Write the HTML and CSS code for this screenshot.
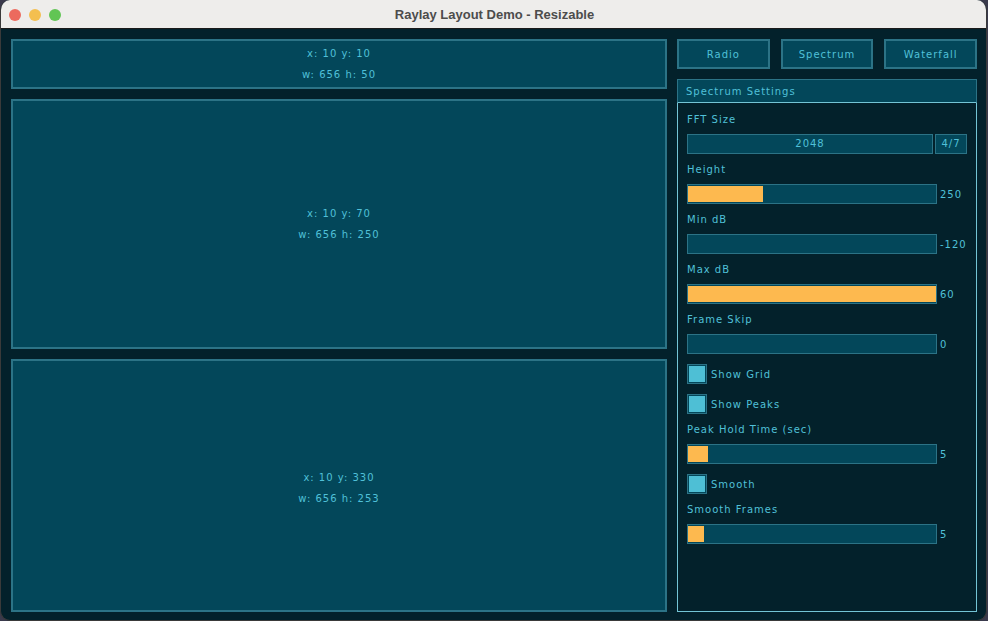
FILE: index.html
```html
<!DOCTYPE html>
<html lang="en">
<head>
  <meta charset="UTF-8">
  <title>Raylay Layout Demo - Resizable</title>
  <link rel="stylesheet" href="styles.css">
</head>
<body>
  <div class="window">
    <div class="titlebar">
      <div class="lights">
        <span class="light red"></span>
        <span class="light yellow"></span>
        <span class="light green"></span>
      </div>
      <div class="title">Raylay Layout Demo - Resizable</div>
    </div>
    <div class="content">
      <div class="left">
        <div class="box box-top">
          <div>x: 10 y: 10</div>
          <div>w: 656 h: 50</div>
        </div>
        <div class="box box-mid">
          <div>x: 10 y: 70</div>
          <div>w: 656 h: 250</div>
        </div>
        <div class="box box-bottom">
          <div>x: 10 y: 330</div>
          <div>w: 656 h: 253</div>
        </div>
      </div>
      <div class="right">
        <div class="tabs">
          <button class="tab">Radio</button>
          <button class="tab">Spectrum</button>
          <button class="tab">Waterfall</button>
        </div>
        <div class="settings">
          <div class="settings-head">Spectrum Settings</div>
          <div class="settings-body">
            <div class="label">FFT Size</div>
            <div class="spinner">
              <div class="spin-value">2048</div>
              <div class="spin-index">4/7</div>
            </div>

            <div class="label">Height</div>
            <div class="slider-row">
              <div class="slider"><div class="fill" style="width: 75px"></div></div>
              <span class="value">250</span>
            </div>

            <div class="label">Min dB</div>
            <div class="slider-row">
              <div class="slider"><div class="fill" style="width: 0px"></div></div>
              <span class="value">-120</span>
            </div>

            <div class="label">Max dB</div>
            <div class="slider-row">
              <div class="slider"><div class="fill" style="width: 248px"></div></div>
              <span class="value">60</span>
            </div>

            <div class="label">Frame Skip</div>
            <div class="slider-row">
              <div class="slider"><div class="fill" style="width: 0px"></div></div>
              <span class="value">0</span>
            </div>

            <div class="check-row">
              <span class="check"><span class="check-fill"></span></span>
              <span>Show Grid</span>
            </div>
            <div class="check-row">
              <span class="check"><span class="check-fill"></span></span>
              <span>Show Peaks</span>
            </div>

            <div class="label">Peak Hold Time (sec)</div>
            <div class="slider-row">
              <div class="slider"><div class="fill" style="width: 20px"></div></div>
              <span class="value">5</span>
            </div>

            <div class="check-row">
              <span class="check"><span class="check-fill"></span></span>
              <span>Smooth</span>
            </div>

            <div class="label">Smooth Frames</div>
            <div class="slider-row">
              <div class="slider"><div class="fill" style="width: 16px"></div></div>
              <span class="value">5</span>
            </div>
          </div>
        </div>
      </div>
    </div>
  </div>
</body>
</html>
```

FILE: styles.css
```css
* {
  box-sizing: border-box;
}
body {
  margin: 0;
  background: #3a3a4c;
  width: 988px;
  height: 621px;
  overflow: hidden;
}
.window {
  width: 987px;
  height: 621px;
  border-radius: 10px;
  overflow: hidden;
  background: #03212b;
  border: 1px solid #3a3a3a;
  border-top: none;
}
.titlebar {
  position: relative;
  height: 29px;
  background: #eeedeb;
  border-bottom: 1px solid #1a1a1a;
  display: flex;
  align-items: center;
  justify-content: center;
}
.lights {
  position: absolute;
  left: 8px;
  top: 9px;
  display: flex;
  gap: 8px;
}
.light {
  width: 12px;
  height: 12px;
  border-radius: 50%;
}
.red { background: #ec6a5e; }
.yellow { background: #f4bf4f; }
.green { background: #61c554; }
.title {
  font-family: "Liberation Sans", Arial, sans-serif;
  font-weight: bold;
  font-size: 13px;
  color: #4c4c4c;
  margin-left: 2px;
}
.content {
  display: flex;
  gap: 10px;
  padding: 10px 0 0 10px;
  font-family: "DejaVu Sans", sans-serif;
  font-size: 10px;
  letter-spacing: 1px;
  color: #50c0d8;
}
.left {
  width: 656px;
  display: flex;
  flex-direction: column;
  gap: 10px;
}
.box {
  background: #03475a;
  border: 2px solid #2c7386;
  display: flex;
  flex-direction: column;
  align-items: center;
  justify-content: center;
  gap: 9px;
  line-height: 12px;
}
.box-top { height: 50px; }
.box-mid { height: 250px; }
.box-bottom {
  height: 253px;
  padding-top: 5px;
}
.right {
  width: 300px;
  display: flex;
  flex-direction: column;
  gap: 10px;
}
.tabs {
  display: flex;
  gap: 11px;
}
.tab {
  flex: 1;
  height: 30px;
  background: #03475a;
  border: 2px solid #2c7386;
  color: #50c0d8;
  font-family: "DejaVu Sans", sans-serif;
  font-size: 10px;
  letter-spacing: 1px;
  padding: 0;
}
.settings {
  height: 533px;
  display: flex;
  flex-direction: column;
}
.settings-head {
  height: 24px;
  line-height: 24px;
  padding-left: 8px;
  background: #03475a;
  border: 1px solid #2c7386;
  border-bottom-color: #74c4d5;
}
.settings-body {
  flex: 1;
  border: 1px solid #74c4d5;
  border-top: none;
  padding: 6px 0 0 9px;
  display: flex;
  flex-direction: column;
  gap: 5px;
}
.label {
  height: 20px;
  line-height: 22px;
}
.spinner {
  display: flex;
  gap: 2px;
  height: 20px;
}
.spin-value,
.spin-index {
  background: #03475a;
  border: 1px solid #2c7386;
  text-align: center;
  line-height: 18px;
}
.spin-value { width: 246px; }
.spin-index { width: 32px; }
.slider-row {
  display: flex;
  align-items: center;
  gap: 3px;
  height: 20px;
}
.slider {
  width: 250px;
  height: 20px;
  background: #03475a;
  border: 1px solid #2c7386;
  padding: 1px 0;
}
.fill {
  height: 16px;
  background: #fdb94f;
}
.check-row {
  display: flex;
  align-items: center;
  gap: 4px;
  height: 20px;
  margin-top: 5px;
}
.check {
  width: 20px;
  height: 20px;
  border: 1px solid #2c7386;
  padding: 1px;
  background: #03475a;
}
.check-fill {
  display: block;
  width: 100%;
  height: 100%;
  background: #4ebfd5;
}
```
